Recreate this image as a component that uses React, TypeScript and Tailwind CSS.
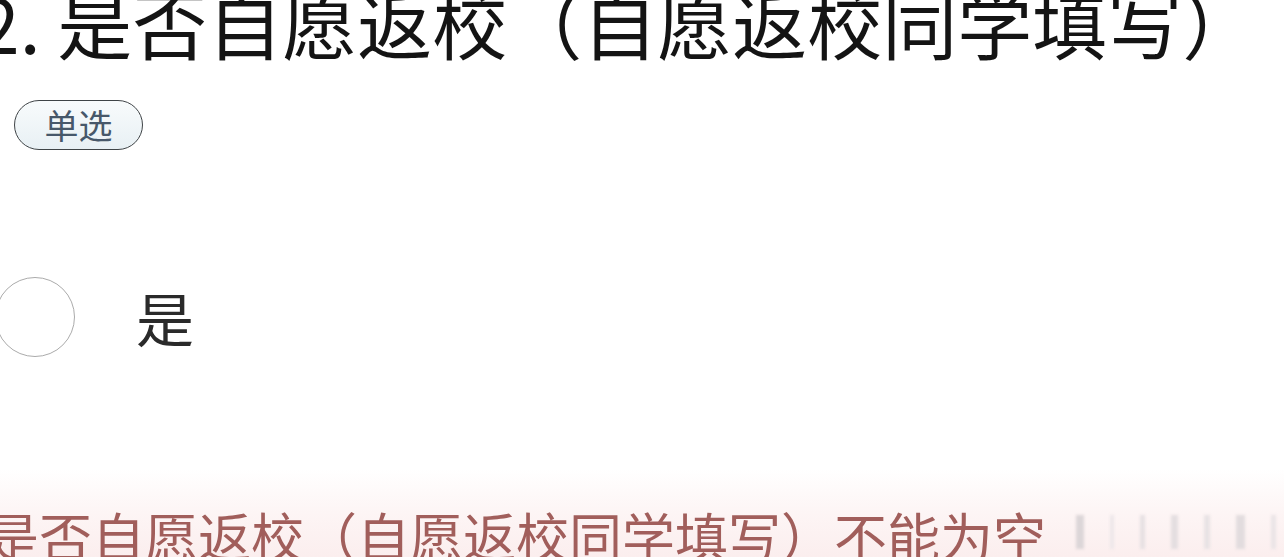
import React from "react";

const font = { fontFamily: '"Noto Sans CJK SC", "Noto Sans", sans-serif' };

export default function App() {
  const bars = [
    { w: 8, c: "bg-[#dcd6d8]" },
    { w: 4, c: "bg-[#ede7e9]" },
    { w: 5, c: "bg-[#e6e0e2]" },
    { w: 7, c: "bg-[#e4dee0]" },
    { w: 6, c: "bg-[#e8e2e4]" },
    { w: 9, c: "bg-[#e2dcde]" },
    { w: 5, c: "bg-[#eae4e6]" },
  ];
  return (
    <div
      className="relative flex h-[557px] w-[1284px] flex-col overflow-hidden bg-white"
      style={font}
    >
      <div className="ml-[-22px] mt-[-16px] whitespace-nowrap text-[75px] font-normal leading-[75px] text-[#141414]">
        2. 是否自愿返校（自愿返校同学填写）
      </div>

      <div className="ml-[14px] mt-[41px] flex h-[50px] w-[129px] items-center justify-center rounded-full border-[1.5px] border-[#3f4447] bg-gradient-to-b from-[#f8fbfc] to-[#e8f0f4] text-[34px] leading-none text-[#47586a]">
        单选
      </div>

      <div className="mt-[127px] flex items-center">
        <div className="ml-[-5px] h-[80px] w-[80px] shrink-0 rounded-full border-[1.5px] border-[#ababab] bg-white" />
        <div className="ml-[61px] text-[58px] leading-none text-[#2a2a2a]">是</div>
      </div>

      <div className="mt-auto flex h-[88px] items-start bg-gradient-to-b from-white via-[#fdf5f5] to-[#fbeeee] pt-[40px]">
        <div className="ml-[-14px] whitespace-nowrap text-[53px] leading-[53px] text-[#a15e5b] blur-[0.6px]">
          是否自愿返校（自愿返校同学填写）不能为空
        </div>
        <div className="ml-[30px] mt-[6px] flex h-[34px] items-stretch gap-[26px] blur-[1.5px]">
          {bars.map((b, i) => (
            <div key={i} className={b.c} style={{ width: b.w }} />
          ))}
        </div>
      </div>
    </div>
  );
}
